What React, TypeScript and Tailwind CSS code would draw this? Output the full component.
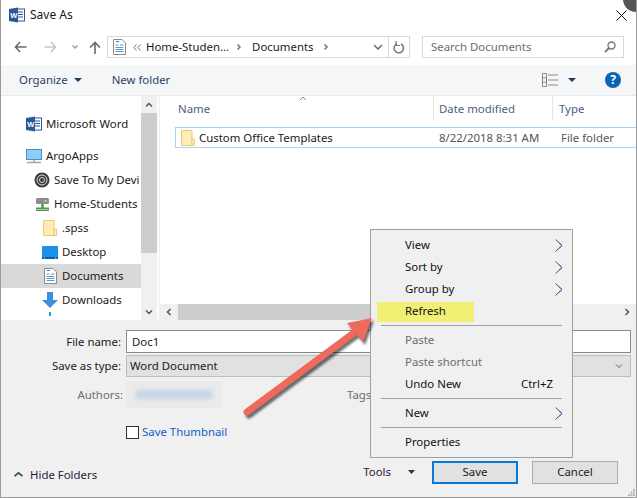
import React from "react";

const WordIcon = ({ s = 16 }: { s?: number }) => (
  <svg width={s} height={s} viewBox="0 0 16 16" className="shrink-0">
    <rect x="7" y="2" width="8.5" height="12" fill="#fff" stroke="#2b579a" />
    <path d="M9 5h5M9 7.500h5M9 10h5" stroke="#2b579a" />
    <path d="M0 2 L9 0.500 V15.500 L0 14 Z" fill="#2b579a" />
    <text x="1.300" y="11" fontSize="7.500" fontWeight="700" fill="#fff" fontFamily="Liberation Sans">W</text>
  </svg>
);

const DocIcon = () => (
  <svg width="13" height="16" viewBox="0 0 13 16" className="shrink-0">
    <path d="M.5.500h8.500l3.500 3.500v11.500h-12z" fill="#fff" stroke="#8a8a8a" />
    <path d="M2.500 6h3M2.500 8.500h8M2.500 10.500h8M2.500 12.500h8M7 6h3.500" stroke="#5b9bd5" />
    <path d="M3 2.500h3" stroke="#2b7cd3" />
  </svg>
);

const Chevron = ({ d, c = "#555", s = 8, w = 1.5 }: { d: string; c?: string; s?: number; w?: number }) => (
  <svg width={s} height={s} viewBox="0 0 8 8" className="shrink-0">
    <path d={d} fill="none" stroke={c} strokeWidth={w} />
  </svg>
);

const Caret = () => (
  <svg width="8" height="4" viewBox="0 0 8 4" className="shrink-0"><path d="M0 0h8L4 4z" fill="#1e3a5f" /></svg>
);

const FolderIcon = () => (
  <svg width="14" height="16" viewBox="0 0 14 16" className="shrink-0">
    <path d="M.5.500h10.500v15H.5z" fill="#fdeeb5" stroke="#e8cb72" />
    <path d="M11 9h2.500v6.500H11z" fill="#fdeeb5" stroke="#e8cb72" />
  </svg>
);

const NavRow = ({ icon, label, indent, active, gapTop }: { icon: React.ReactNode; label: string; indent: string; active?: boolean; gapTop?: boolean }) => (
  <div className={`flex h-6 shrink-0 items-center whitespace-nowrap overflow-hidden ${indent} ${active ? "bg-[#d9d9d9]" : ""} ${gapTop ? "mt-[8px]" : ""}`}>
    <span className="flex w-5 shrink-0 justify-center">{icon}</span>
    <span className="ml-[2px]">{label}</span>
  </div>
);

const Sub = () => (
  <svg width="8" height="13" viewBox="0 0 8 13" className="shrink-0">
    <path d="M.5.500 7 6.500.5 12.500" fill="none" stroke="#555" />
    <path d="M4 3.700 7 6.500 4 9.300" fill="none" stroke="#2a6fd0" />
  </svg>
);

const MenuItem = ({ label, right, sub, muted }: { label: string; right?: string; sub?: boolean; muted?: boolean }) => (
  <div className={`flex h-[22px] items-center justify-between pl-[34px] pr-[9px] ${muted ? "text-[#6d6d6d]" : "text-[#111]"}`}>
    <span>{label}</span>
    {right && <span className="pr-[10px] text-[#111]">{right}</span>}
    {sub && <Sub />}
  </div>
);

const Sep = () => <div className="mx-[10px] my-[3px] h-px bg-[#a0a0a0]" />;

export default function App() {
  return (
    <div
      className="relative flex h-[498px] w-[637px] flex-col overflow-hidden border-b border-l border-r border-[#9a9a9a] bg-white text-[11.4px] text-[#1a1a1a]"
      style={{ fontFamily: '"Noto Sans", sans-serif' }}
    >
      {/* Title */}
      <div className="flex h-[30px] shrink-0 items-center pl-[8px]">
        <WordIcon />
        <span className="ml-[5px] text-[12px]">Save As</span>
        <svg width="11" height="11" viewBox="0 0 11 11" className="ml-auto mr-[9px] mt-[.5px]">
          <path d="M.5.500l10 10M10.500.500l-10 10" stroke="#111" />
        </svg>
      </div>
      <div className="absolute -right-[13px] -top-[14px] h-[26px] w-[26px] rounded-full bg-[#555]" />

      {/* Navigation bar */}
      <div className="flex h-[35px] shrink-0 items-start pt-[6px]">
        <div className="flex h-[22px] w-[106px] items-center pl-[13px]">
          <svg width="13" height="12" viewBox="0 0 13 12" className="shrink-0"><path d="M12.500 6H1.500M6 1 1.500 6 6 11" fill="none" stroke="#6a6a6a" strokeWidth="1.600" /></svg>
          <svg width="13" height="12" viewBox="0 0 13 12" className="ml-[17px] shrink-0"><path d="M.5 6h11M7 1l4.500 5L7 11" fill="none" stroke="#c8c8c8" strokeWidth="1.600" /></svg>
          <span className="ml-[14px]"><Chevron d="M1.500 2.500 4 5l2.500-2.500" c="#a0a0a0" /></span>
          <svg width="12" height="13" viewBox="0 0 12 13" className="ml-[10px] shrink-0"><path d="M6 13V1.500M1 6.500l5-5 5 5" fill="none" stroke="#6a6a6a" strokeWidth="1.600" /></svg>
        </div>
        <div className="flex h-[22px] w-[303px] items-center border border-[#d9d9d9] pl-[5px]">
          <DocIcon />
          <svg width="8" height="7" viewBox="0 0 8 7" className="ml-[7px] shrink-0"><path d="M3.500.500.8 3.500l2.700 3M7.500.500l-2.700 3 2.700 3" fill="none" stroke="#777" /></svg>
          <span className="ml-[5px] whitespace-nowrap">Home-Studen...</span>
          <span className="ml-[6px]"><Chevron d="M2.500 1.500 5 4 2.500 6.500" c="#777" /></span>
          <span className="ml-[9px]">Documents</span>
          <span className="ml-[8px]"><Chevron d="M2.500 1.500 5 4 2.500 6.500" c="#777" /></span>
          <span className="ml-auto mr-[6px]"><Chevron d="M0 2l4 4 4-4" c="#666" /></span>
          <span className="flex h-full w-[21px] items-center justify-center border-l border-[#d9d9d9]">
            <svg width="12" height="13" viewBox="0 0 12 13"><path d="M4 2.800a4.700 4.700 0 1 0 4 .2" fill="none" stroke="#777" strokeWidth="1.500" /><path d="M3 0v4.500h4" fill="none" stroke="#777" strokeWidth="1.200" /></svg>
          </span>
        </div>
        <div className="ml-[12px] flex h-[22px] w-[202px] items-center justify-between border border-[#d9d9d9] pl-[8px] pr-[7px] text-[#6d6d6d]">
          <span>Search Documents</span>
          <svg width="12" height="12" viewBox="0 0 12 12"><circle cx="7.500" cy="4.500" r="3.500" fill="none" stroke="#777" strokeWidth="1.400" /><path d="M5 7 1 11" stroke="#777" strokeWidth="1.800" /></svg>
        </div>
      </div>

      {/* Toolbar */}
      <div className="flex h-[31px] shrink-0 items-center border-b border-[#e8e8e8] bg-[#f5f6f7] pl-[18px] pr-[15px] text-[#2c3e66]">
        <span>Organize</span>
        <span className="ml-[6px]"><Caret /></span>
        <span className="ml-[30px]">New folder</span>
        <svg width="16" height="14" viewBox="0 0 16 14" className="ml-auto shrink-0">
          <path d="M.5.500h4v13h-4zM.5 4.800h4M.5 9.200h4M6 2h10M6 7h10M6 12h10" fill="none" stroke="#8a8a8a" />
        </svg>
        <span className="ml-[10px]"><Caret /></span>
        <span className="ml-[29px] flex h-4 w-4 items-center justify-center rounded-full bg-[#0b63b5] text-[12px] font-bold leading-none text-white">?</span>
      </div>

      {/* Main split */}
      <div className="flex h-[224px] shrink-0">
        <div className="flex w-[140px] shrink-0 flex-col overflow-hidden pt-[16px]">
          <NavRow icon={<WordIcon />} label="Microsoft Word" indent="pl-[23px]" />
          <NavRow icon={
            <svg width="16" height="15" viewBox="0 0 16 15"><rect x=".5" y=".5" width="15" height="10" fill="#8ccdf5" stroke="#4a8fc5" /><path d="M1 13.500h14M8 11v3" stroke="#a5a5a5" strokeWidth="1.500" /></svg>
          } label="ArgoApps" indent="pl-[23px]" gapTop />
          <NavRow icon={
            <svg width="16" height="16" viewBox="0 0 16 16"><circle cx="8" cy="8" r="7.500" fill="#3a3a3a" /><circle cx="8" cy="8" r="5" fill="none" stroke="#ddd" /><circle cx="8" cy="8" r="2.500" fill="none" stroke="#ddd" /></svg>
          } label="Save To My Devi" indent="pl-[31px]" />
          <NavRow icon={
            <svg width="15" height="13" viewBox="0 0 15 13"><rect x="1" y="0" width="13" height="6" rx="1.500" fill="#8c8c8c" /><circle cx="10.500" cy="3" r="1" fill="#bfe8a8" /><path d="M7.500 6v4" stroke="#3fa33f" strokeWidth="2.500" /><path d="M1 10.500h13" stroke="#3fa33f" strokeWidth="2" /><path d="M1 12.500h13" stroke="#777" /></svg>
          } label="Home-Students" indent="pl-[31px]" />
          <NavRow icon={<FolderIcon />} label=".spss" indent="pl-[39px]" />
          <NavRow icon={
            <svg width="16" height="13" viewBox="0 0 16 13"><rect width="16" height="12" fill="#1e90e8" /><rect y="11" width="16" height="2" fill="#0c5fa8" /><path d="M2 12h1M13 12h1" stroke="#cfe8fb" /></svg>
          } label="Desktop" indent="pl-[39px]" />
          <NavRow icon={<DocIcon />} label="Documents" indent="pl-[39px]" active />
          <NavRow icon={
            <svg width="16" height="16" viewBox="0 0 16 16"><path d="M5 0h6v8h5l-8 8-8-8h5z" fill="#3d8fdc" /></svg>
          } label="Downloads" indent="pl-[39px]" />
          <div className="h-[4px] shrink-0 pl-[48px]"><span className="block h-[4px] w-[2px] bg-[#3d8fdc]" /></div>
        </div>
        {/* Nav scrollbar */}
        <div className="flex w-[16px] shrink-0 flex-col bg-[#f0f0f0]">
          <div className="flex h-[17px] items-center justify-center"><Chevron d="M1 5.500 4 2.500l3 3" c="#555" /></div>
          <div className="h-[140px] bg-[#cdcdcd]" />
          <div className="mt-auto flex h-[17px] items-center justify-center"><Chevron d="M1 2.500 4 5.500l3-3" c="#555" /></div>
        </div>
        <div className="w-[2px] shrink-0 bg-white" />
        {/* File list */}
        <div className="flex min-w-0 flex-1 flex-col border-l border-[#f0f0f0]">
          <div className="relative flex h-[25px] shrink-0 items-center text-[#4c607a]">
            <span className="absolute left-[139px] top-0"><Chevron d="M1 4 4 1l3 3" c="#888" w={1} /></span>
            <span className="w-[273px] pl-[18px]">Name</span>
            <span className="w-[119px] border-l border-[#e5e5e5] pl-[5px] leading-[25px]">Date modified</span>
            <span className="border-l border-[#e5e5e5] pl-[6px] leading-[25px]">Type</span>
          </div>
          <div className="ml-[15px] mt-[6px] flex h-[21px] shrink-0 items-center whitespace-nowrap border-y border-l border-[#a9d4f5] bg-white pl-[5px]">
            <FolderIcon />
            <span className="ml-[4px] w-[240px]">Custom Office Templates</span>
            <span className="w-[122px] text-[#555]">8/22/2018 8:31 AM</span>
            <span className="text-[#555]">File folder</span>
          </div>
          <div className="mt-auto flex h-[16px] shrink-0 items-center bg-[#f0f0f0]">
            <span className="flex w-[17px] justify-center"><Chevron d="M5.500 1 2.500 4l3 3" c="#555" /></span>
            <div className="ml-px h-full w-[230px] bg-[#cdcdcd]" />
            <span className="ml-auto mr-[5px]"><Chevron d="M2.500 1l3 3-3 3" c="#555" /></span>
          </div>
        </div>
      </div>

      {/* Form */}
      <div className="relative flex flex-1 flex-col bg-[#f0f0f0]">
        <div className="mt-[10px] flex h-[23px] items-center">
          <span className="w-[120px] text-right">File name:</span>
          <div className="ml-[5px] flex h-[23px] w-[505px] items-center border border-[#8a8a8a] bg-white pl-[5px]">Doc1</div>
        </div>
        <div className="mt-[2px] flex h-[22px] items-center">
          <span className="w-[120px] text-right">Save as type:</span>
          <div className="ml-[5px] flex h-[22px] w-[505px] items-center justify-between border border-[#bdbdbd] bg-[#e1e1e1] pl-[3px] pr-[7px]">
            <span>Word Document</span>
            <Chevron d="M1 2.500 4 5.500l3-3" c="#555" w={1} />
          </div>
        </div>
        <div className="mt-[4px] flex h-[27px] items-center">
          <span className="w-[122px] text-right text-[#6d6d6d]">Authors:</span>
          <div className="ml-[3px] flex h-[27px] w-[96px] items-center justify-center bg-[#eaeaea]">
            <div className="h-[9px] w-[78px] rounded-full bg-[#c6d6e8] blur-[2px]" />
          </div>
          <span className="ml-[125px] text-[#6d6d6d]">Tags:</span>
        </div>
        <div className="mt-[17px] flex h-[14px] items-center pl-[125px]">
          <span className="h-[13px] w-[13px] border border-[#333] bg-white" />
          <span className="ml-[3px] text-[#0b62c4]">Save Thumbnail</span>
        </div>
        <div className="mt-[21px] flex h-[24px] items-center pl-[13px]">
          <div className="flex items-center pt-[6px]">
            <Chevron d="M0.500 5.500 4 2.500l3.500 3" c="#444" s={9} />
            <span className="ml-[7px] text-[#2a1a3a]">Hide Folders</span>
          </div>
          <span className="ml-auto text-[#2a1a3a]">Tools</span>
          <span className="ml-[17px]"><svg width="7" height="4" viewBox="0 0 7 4"><path d="M0 0h7L3.500 4z" fill="#333" /></svg></span>
          <button className="ml-[17px] h-[23px] w-[86px] border-2 border-[#0a78d7] bg-[#e1e1e1]">Save</button>
          <button className="ml-[14px] mr-[18px] h-[23px] w-[86px] border border-[#adadad] bg-[#e1e1e1]">Cancel</button>
        </div>
        <svg width="7" height="7" viewBox="0 0 7 7" className="absolute bottom-[1px] right-[1px]">
          <path d="M5 0h2v2H5zM2.500 2.500h2v2h-2zM5 2.500h2v2H5zM0 5h2v2H0zM2.500 5h2v2h-2zM5 5h2v2H5z" fill="#bbb" />
        </svg>
      </div>

      {/* Context menu */}
      <div className="absolute left-[369px] top-[229px] h-[229px] w-[203px] border border-[#a0a0a0] bg-[#f0f0f0] pt-[4px]">
        <MenuItem label="View" sub />
        <MenuItem label="Sort by" sub />
        <MenuItem label="Group by" sub />
        <div className="relative">
          <div className="absolute left-[6px] top-[2px] h-[20px] w-[97px] bg-[#f2ef75]" />
          <div className="relative"><MenuItem label="Refresh" /></div>
        </div>
        <Sep />
        <MenuItem label="Paste" muted />
        <MenuItem label="Paste shortcut" muted />
        <MenuItem label="Undo New" right="Ctrl+Z" />
        <Sep />
        <MenuItem label="New" sub />
        <Sep />
        <MenuItem label="Properties" />
      </div>

      {/* Arrow annotation */}
      <svg width="170" height="130" viewBox="0 0 170 130" className="absolute left-[228px] top-[300px] drop-shadow-[2px_3px_1px_rgba(0,0,0,0.55)]">
        <path d="M18 112 L126 32" stroke="#ee6a5c" strokeWidth="7" strokeLinecap="round" />
        <path d="M118 23 L143 18 L134 42 Z" fill="#ee6a5c" />
      </svg>
    </div>
  );
}
